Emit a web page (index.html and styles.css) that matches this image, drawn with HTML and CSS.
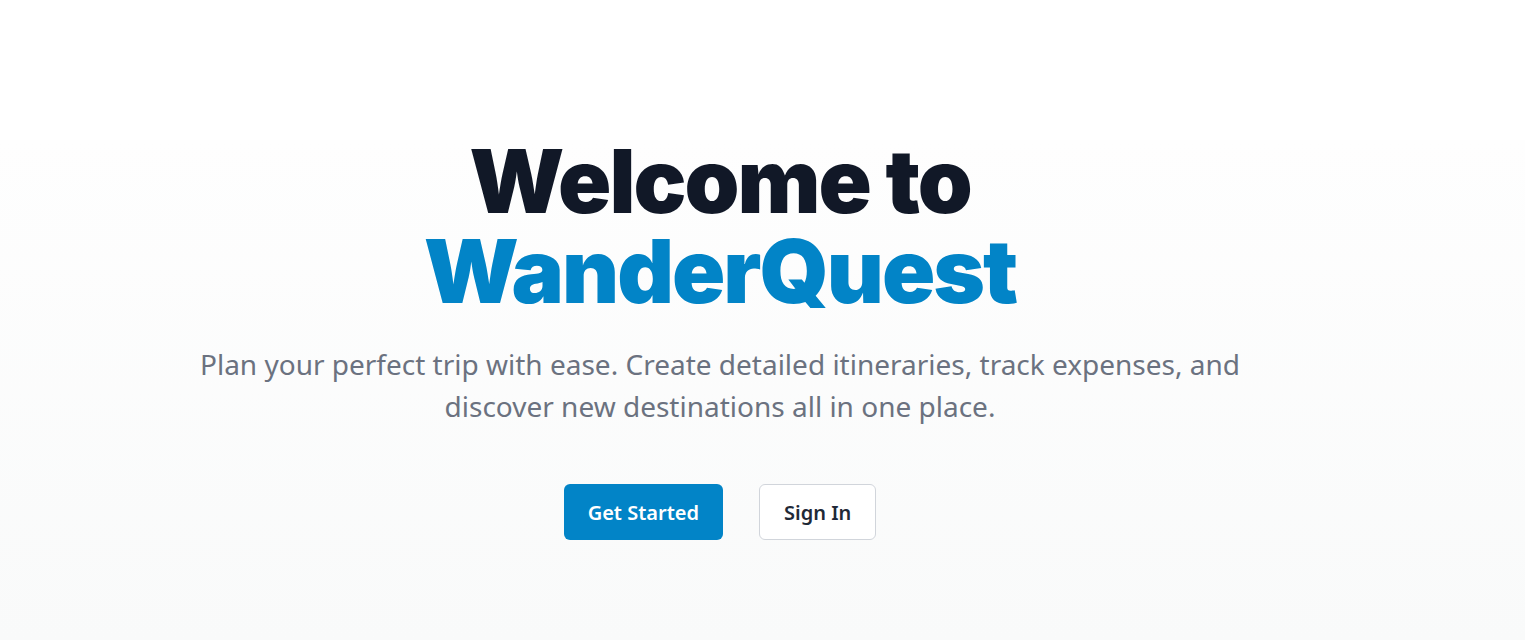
FILE: index.html
```html
<!DOCTYPE html>
<html lang="en">
<head>
<meta charset="utf-8">
<title>WanderQuest</title>
<link rel="stylesheet" href="styles.css">
</head>
<body>
<header class="topbar"></header>
<main class="hero">
  <div class="hero-inner">
    <h1 class="title">
      <span class="title-line">Welcome to</span>
      <span class="title-line brand">WanderQuest</span>
    </h1>
    <p class="lead">Plan your perfect trip with ease. Create detailed itineraries, track expenses, and discover new destinations all in one place.</p>
    <div class="actions">
      <a class="btn btn-primary" href="#">Get Started</a>
      <a class="btn btn-outline" href="#">Sign In</a>
    </div>
  </div>
</main>
</body>
</html>
```

FILE: styles.css
```css
* { box-sizing: border-box; }
html, body { margin: 0; padding: 0; }
body {
  font-family: "Noto Sans", "Open Sans", sans-serif;
  background: #f9fafb;
  min-height: 640px;
}
.topbar {
  height: 140px;
  background: #ffffff;
}
.hero {
  height: 500px;
  background: linear-gradient(to bottom, #fefefe 0%, #f9fafa 100%);
  padding-right: 85px;
}
.hero-inner {
  display: flex;
  flex-direction: column;
  align-items: center;
  text-align: center;
}
.title {
  margin: -4px 0 0;
  font-family: "Inter", "Noto Sans", sans-serif;
  font-weight: 900;
  font-size: 88px;
  line-height: 90px;
  color: #111827;
  letter-spacing: -2px;
}
.title-line { display: block; }
.brand { color: #0284c7; }
.lead {
  margin: 27px 0 0;
  max-width: 1060px;
  font-size: 28px;
  line-height: 42px;
  color: #6b7280;
}
.actions {
  display: flex;
  gap: 36px;
  margin-top: 57px;
}
.btn {
  display: inline-flex;
  align-items: center;
  justify-content: center;
  height: 56px;
  padding: 0 24px;
  border-radius: 6px;
  font-size: 20px;
  font-weight: 600;
  text-decoration: none;
}
.btn-primary {
  background: #0284c7;
  color: #ffffff;
}
.btn-outline {
  background: #ffffff;
  color: #1f2937;
  border: 1px solid #d1d5db;
}
```
